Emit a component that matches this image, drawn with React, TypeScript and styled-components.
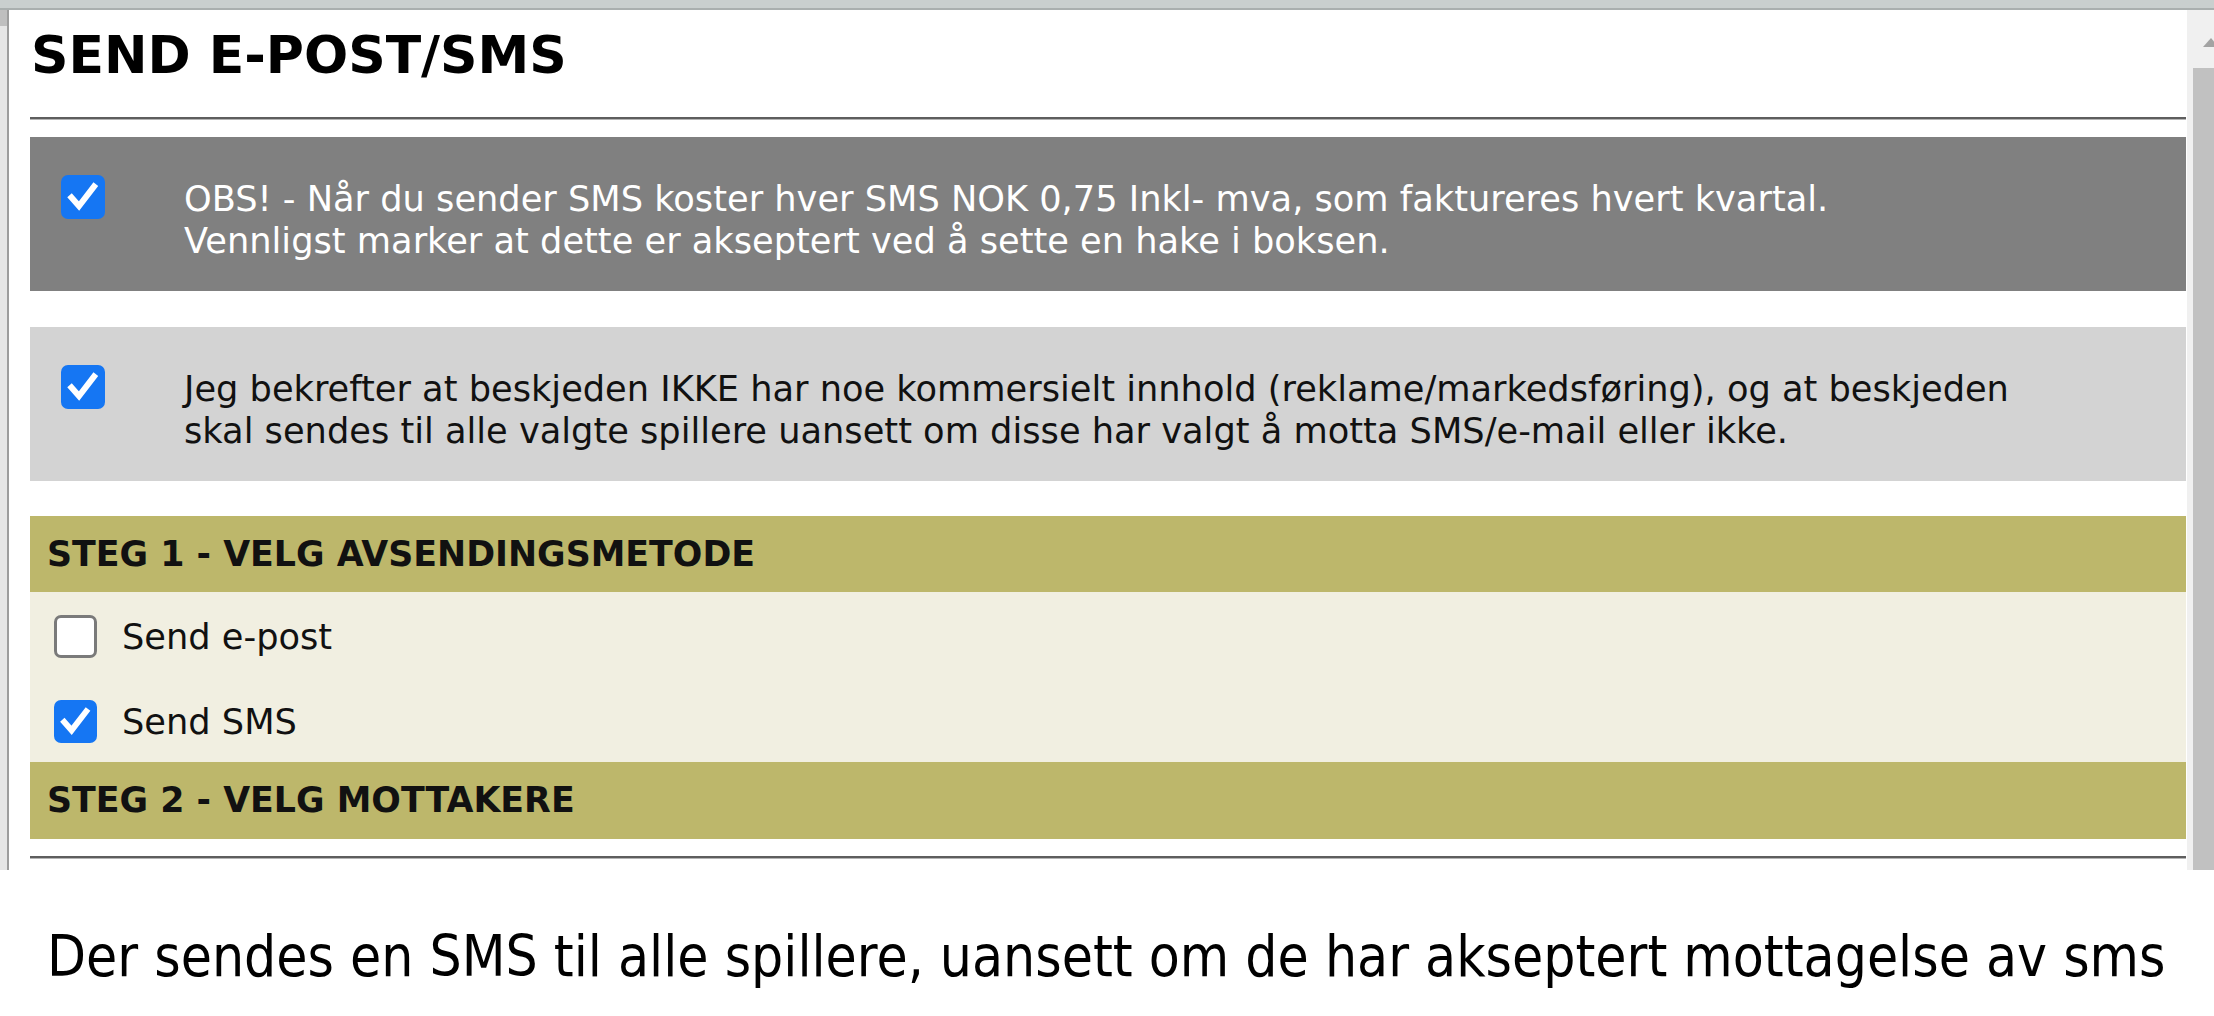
import React from "react";
import styled, { createGlobalStyle } from "styled-components";

const GlobalStyle = createGlobalStyle`
  html, body {
    margin: 0;
    padding: 0;
    background: #ffffff;
  }
  body {
    font-family: "DejaVu Sans", Verdana, sans-serif;
    color: #000;
  }
`;

const Screen = styled.div`
  display: flex;
  flex-direction: column;
  height: 870px;
  overflow: hidden;
`;

const TopStrip = styled.div`
  flex: none;
  height: 8px;
  background: #c9cfce;
  border-bottom: 2px solid #a9afae;
`;

const Viewport = styled.div`
  flex: 1;
  display: flex;
  min-height: 0;
`;

const Gutter = styled.div`
  flex: none;
  width: 7px;
  background: linear-gradient(#bfbfbf 0 16px, #e6e6e6 16px);
  border-right: 2px solid #9d9d9d;
  box-shadow: 1px 0 0 #d9d9d9;
`;

const Content = styled.main`
  flex: 1;
  min-width: 0;
  display: flex;
  flex-direction: column;
  padding: 15px 1px 0 21px;
  background: #ffffff;
`;

const Title = styled.h1`
  margin: 0;
  padding-left: 1px;
  font-family: "DejaVu Sans", Verdana, sans-serif;
  font-weight: bold;
  font-size: 52px;
  line-height: 60px;
  color: #000;
`;

const Rule = styled.div<{ $gap: number }>`
  flex: none;
  margin-top: ${(p) => p.$gap}px;
  height: 2px;
  background: #5e5e5e;
  border-bottom: 1px solid #b4b4b4;
`;

const Notice = styled.div<{ $tone: "dark" | "light"; $gap: number }>`
  display: flex;
  align-items: flex-start;
  gap: 79px;
  margin-top: ${(p) => p.$gap}px;
  padding: 38px 0 29px 31px;
  background: ${(p) => (p.$tone === "dark" ? "#808080" : "#d3d3d3")};
  color: ${(p) => (p.$tone === "dark" ? "#ffffff" : "#111111")};
`;

const NoticeText = styled.p`
  margin: 3px 0 0;
  font-size: 35.2px;
  line-height: 42px;
`;

const BoxShell = styled.span<{ $checked: boolean; $size: number }>`
  flex: none;
  display: inline-flex;
  align-items: center;
  justify-content: center;
  box-sizing: border-box;
  width: ${(p) => p.$size}px;
  height: ${(p) => p.$size}px;
  border-radius: 7px;
  background: ${(p) => (p.$checked ? "#1576f3" : "#ffffff")};
  border: ${(p) => (p.$checked ? "none" : "3px solid #7a7a7a")};
`;

const SectionHeader = styled.h2<{ $gap: number; $height: number }>`
  margin: ${(p) => p.$gap}px 0 0;
  height: ${(p) => p.$height}px;
  line-height: ${(p) => p.$height}px;
  padding-left: 17px;
  background: #bdb76b;
  color: #111;
  font-size: 34.8px;
  font-weight: bold;
`;

const Options = styled.div`
  display: flex;
  flex-direction: column;
  gap: 42px;
  padding: 23px 24px 19px;
  background: #f1efe1;
`;

const OptionRow = styled.label`
  display: flex;
  align-items: center;
  gap: 25px;
  height: 43px;
  font-size: 35.2px;
  line-height: 42px;
  color: #111;
`;

const Scrollbar = styled.div`
  flex: none;
  width: 27px;
  display: flex;
  flex-direction: column;
  background: #f0f0f0;
`;

const ArrowZone = styled.div`
  flex: none;
  height: 58px;
  display: flex;
  padding: 28px 0 0 16px;
  box-sizing: border-box;
`;

const ArrowUp = styled.span`
  width: 0;
  height: 0;
  border-left: 8px solid transparent;
  border-right: 8px solid transparent;
  border-bottom: 9px solid #a3a3a3;
`;

const Thumb = styled.div`
  flex: 1;
  margin-left: 6px;
  background: #c1c1c1;
`;

const Caption = styled.p`
  margin: 53px 0 0;
  padding-left: 47px;
  font-family: "DejaVu Sans Condensed", "Liberation Sans", sans-serif;
  font-size: 56.4px;
  line-height: 68px;
  color: #000;
  white-space: nowrap;
`;

function Check({ checked, size }: { checked: boolean; size: number }) {
  return (
    <BoxShell $checked={checked} $size={size}>
      {checked && (
        <svg width={size} height={size} viewBox="0 0 44 44" aria-hidden="true">
          <path
            d="M10.5 22.5 L18 31 L33 11.5"
            fill="none"
            stroke="#ffffff"
            strokeWidth="6"
            strokeLinecap="square"
            strokeLinejoin="miter"
          />
        </svg>
      )}
    </BoxShell>
  );
}

export default function App() {
  return (
    <>
      <GlobalStyle />
      <Screen>
        <TopStrip />
        <Viewport>
          <Gutter />
          <Content>
            <Title>SEND E-POST/SMS</Title>
            <Rule $gap={32} />
            <Notice $tone="dark" $gap={17}>
              <Check checked size={44} />
              <NoticeText>
                OBS! - Når du sender SMS koster hver SMS NOK 0,75 Inkl- mva, som faktureres hvert kvartal.
                <br />
                Vennligst marker at dette er akseptert ved å sette en hake i boksen.
              </NoticeText>
            </Notice>
            <Notice $tone="light" $gap={36}>
              <Check checked size={44} />
              <NoticeText>
                Jeg bekrefter at beskjeden IKKE har noe kommersielt innhold (reklame/markedsføring), og at beskjeden
                <br />
                skal sendes til alle valgte spillere uansett om disse har valgt å motta SMS/e-mail eller ikke.
              </NoticeText>
            </Notice>
            <SectionHeader $gap={35} $height={76}>
              STEG 1 - VELG AVSENDINGSMETODE
            </SectionHeader>
            <Options>
              <OptionRow>
                <Check checked={false} size={43} />
                Send e-post
              </OptionRow>
              <OptionRow>
                <Check checked size={43} />
                Send SMS
              </OptionRow>
            </Options>
            <SectionHeader $gap={0} $height={77}>
              STEG 2 - VELG MOTTAKERE
            </SectionHeader>
            <Rule $gap={17} />
          </Content>
          <Scrollbar>
            <ArrowZone>
              <ArrowUp />
            </ArrowZone>
            <Thumb />
          </Scrollbar>
        </Viewport>
      </Screen>
      <Caption>Der sendes en SMS til alle spillere, uansett om de har akseptert mottagelse av sms</Caption>
    </>
  );
}
